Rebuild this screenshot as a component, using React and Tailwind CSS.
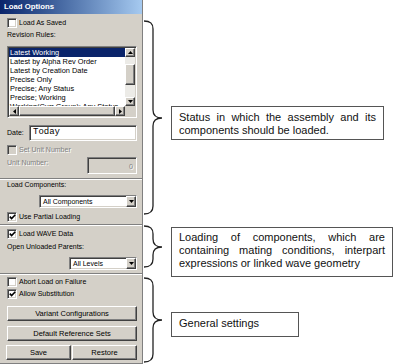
import React from 'react';

const sunken =
  'border border-t-[#808080] border-l-[#808080] border-b-white border-r-white shadow-[inset_1px_1px_0_#404040,inset_-1px_-1px_0_#d4d0c8]';
const raised =
  'border border-t-white border-l-white border-b-[#404040] border-r-[#404040] shadow-[inset_-1px_-1px_0_#808080] bg-[#d4d0c8]';

const Tri = ({ dir }) => {
  if (dir === 'up')
    return (
      <svg width="5" height="3" viewBox="0 0 5 3">
        <polygon points="0,3 5,3 2.5,0" fill="#000" />
      </svg>
    );
  if (dir === 'down')
    return (
      <svg width="5" height="3" viewBox="0 0 5 3">
        <polygon points="0,0 5,0 2.5,3" fill="#000" />
      </svg>
    );
  if (dir === 'left')
    return (
      <svg width="3" height="5" viewBox="0 0 3 5">
        <polygon points="3,0 3,5 0,2.5" fill="#000" />
      </svg>
    );
  return (
    <svg width="3" height="5" viewBox="0 0 3 5">
      <polygon points="0,0 0,5 3,2.5" fill="#000" />
    </svg>
  );
};

const Check = ({ checked, disabled }) => (
  <span
    className={`w-[10px] h-[10px] shrink-0 flex items-center justify-center ${sunken} ${
      disabled ? 'bg-[#d4d0c8]' : 'bg-white'
    }`}
  >
    {checked && (
      <svg width="7" height="6" viewBox="0 0 7 6">
        <polyline points="0.8,2.6 2.6,4.6 6.3,0.8" fill="none" stroke="#000" strokeWidth="1.6" />
      </svg>
    )}
  </span>
);

const CheckRow = ({ label, checked, disabled, className = '' }) => (
  <div className={`h-[12px] flex items-center gap-[2px] ${className}`}>
    <Check checked={checked} disabled={disabled} />
    <span
      className={
        disabled ? 'text-[#808080] [text-shadow:1px_1px_0_#fff]' : ''
      }
    >
      {label}
    </span>
  </div>
);

const Separator = ({ className = '' }) => (
  <div className={`-ml-[7px] -mr-[5px] border-t border-t-[#808080] border-b border-b-white ${className}`} />
);

const Select = ({ value, className = '' }) => (
  <div className={`h-[13px] bg-white flex items-stretch ${sunken} ${className}`}>
    <span className="flex-1 pl-[3px] leading-[11px]">{value}</span>
    <span className={`w-[10px] flex items-center justify-center ${raised}`}>
      <Tri dir="down" />
    </span>
  </div>
);

const Btn = ({ children, className = '' }) => (
  <div className={`h-[15px] flex items-center justify-center text-[7.5px] ${raised} ${className}`}>
    {children}
  </div>
);

const rules = [
  'Latest Working',
  'Latest by Alpha Rev Order',
  'Latest by Creation Date',
  'Precise Only',
  'Precise; Any Status',
  'Precise; Working',
  'Working(Curr Group); Any Status',
];

const ListBox = () => (
  <div className={`mt-[5px] h-[72px] bg-white p-[1px] flex flex-col ${sunken}`}>
    <div className="flex flex-1 min-h-0">
      <div className="flex-1 overflow-hidden text-[7.4px]">
        {rules.map((r, i) => (
          <div
            key={r}
            className={`h-[9px] leading-[9px] pl-[1px] whitespace-nowrap ${
              i === 0 ? 'bg-[#0a246a] text-white' : ''
            }`}
          >
            {r}
          </div>
        ))}
      </div>
      <div className="w-[10px] flex flex-col bg-[#ecebe7]">
        <span className={`h-[9px] flex items-center justify-center ${raised}`}>
          <Tri dir="up" />
        </span>
        <div className="flex-1">
          <div className={`mt-[7px] h-[21px] ${raised}`} />
        </div>
        <span className={`h-[9px] flex items-center justify-center ${raised}`}>
          <Tri dir="down" />
        </span>
      </div>
    </div>
    <div className="h-[10px] flex bg-[#ecebe7]">
      <span className={`w-[10px] flex items-center justify-center ${raised}`}>
        <Tri dir="left" />
      </span>
      <div className={`flex-1 ${raised}`} />
      <span className={`w-[10px] flex items-center justify-center ${raised}`}>
        <Tri dir="right" />
      </span>
      <span className="w-[10px] bg-[#d4d0c8]" />
    </div>
  </div>
);

const Brace = ({ h }) => {
  const m = Math.round(h / 2);
  const d = `M1 1 C7 1 10 3 10 9 L10 ${m - 8} C10 ${m - 3} 13 ${m} 19 ${m} C13 ${m} 10 ${m + 3} 10 ${m + 8} L10 ${h - 9} C10 ${h - 3} 7 ${h - 1} 1 ${h - 1}`;
  return (
    <svg width="24" height={h} className="shrink-0">
      <path d={d} fill="none" stroke="#222" strokeWidth="1.3" />
    </svg>
  );
};

const Note = ({ children, className = '' }) => (
  <div
    className={`ml-[4px] border border-[#555] px-[7px] text-[11px] text-[#111] text-justify font-['Liberation_Sans',Arial,sans-serif] ${className}`}
  >
    {children}
  </div>
);

export default function App() {
  return (
    <div className="w-[396px] h-[364px] bg-white flex overflow-hidden">
      {/* Dialog panel */}
      <div className="w-[143px] h-[364px] shrink-0 bg-[#d4d0c8] border-r border-b border-[#808080] flex flex-col text-[7px] text-black font-['Liberation_Sans',Arial,sans-serif]">
        <div className="h-[14px] bg-linear-to-r from-[#0a246a] to-[#a6caf0] text-white font-bold text-[7.75px] leading-[14px] pl-[4px]">
          Load Options
        </div>
        <div className="pl-[7px] pr-[5px] flex flex-col">
          <CheckRow className="mt-[3px]" label="Load As Saved" />
          <div className="h-[12px] leading-[12px]">Revision Rules:</div>
          <ListBox />

          <div className="mt-[7px] h-[16px] flex items-center">
            <span className="w-[22px]">Date:</span>
            <div className={`flex-1 h-full bg-white flex items-center pl-[3px] text-[9px] font-['Liberation_Mono','Courier_New',monospace] ${sunken}`}>
              Today
            </div>
          </div>

          <CheckRow className="mt-[3px]" label="Set Unit Number" disabled />
          <div className="mt-[1px] h-[17px] flex items-start">
            <span className="flex-1 leading-[12px] text-[#808080] [text-shadow:1px_1px_0_#fff]">
              Unit Number:
            </span>
            <div className={`w-[50px] h-full flex items-end justify-end pr-[3px] pb-[1px] text-[#808080] [text-shadow:1px_1px_0_#fff] ${sunken}`}>
              0
            </div>
          </div>

          <Separator className="mt-[4px]" />
          <div className="h-[10px] leading-[10px]">Load Components:</div>
          <Select value="All Components" className="mt-[5px] ml-[32px]" />
          <CheckRow className="mt-[3px]" label="Use Partial Loading" checked />

          <Separator className="mt-[1px]" />
          <CheckRow className="mt-[2px]" label="Load WAVE Data" checked />
          <div className="mt-[1px] h-[12px] leading-[12px]">Open Unloaded Parents:</div>
          <Select value="All Levels" className="mt-[4px] ml-[62px]" />

          <Separator className="mt-[3px]" />
          <CheckRow className="mt-[1px]" label="Abort Load on Failure" />
          <CheckRow label="Allow Substitution" checked />

          <Btn className="mt-[6px]">Variant Configurations</Btn>
          <Btn className="mt-[5px]">Default Reference Sets</Btn>
          <div className="mt-[4px] -ml-[1px] flex gap-[1px]">
            <Btn className="flex-1 h-[14px]">Save</Btn>
            <Btn className="flex-1 h-[14px]">Restore</Btn>
          </div>
        </div>
      </div>

      {/* Annotations */}
      <div className="flex-1 flex flex-col pt-[20px]">
        <div className="h-[195px] flex items-start">
          <Brace h={195} />
          <Note className="mt-[86px] w-[213px] h-[34px] pt-[4px] leading-[12.5px]">
            Status in which the assembly and its components should be loaded.
          </Note>
        </div>
        <div className="mt-[10px] h-[43px] flex items-start">
          <Brace h={43} />
          <Note className="mt-[2px] w-[222px] h-[50px] pt-[3px] leading-[13px]">
            Loading of components, which are containing mating conditions, interpart expressions or linked wave geometry
          </Note>
        </div>
        <div className="mt-[9px] h-[86px] flex items-start">
          <Brace h={86} />
          <Note className="mt-[35px] w-[128px] h-[25px] pt-[4px] leading-[13px]">
            General settings
          </Note>
        </div>
      </div>
    </div>
  );
}
